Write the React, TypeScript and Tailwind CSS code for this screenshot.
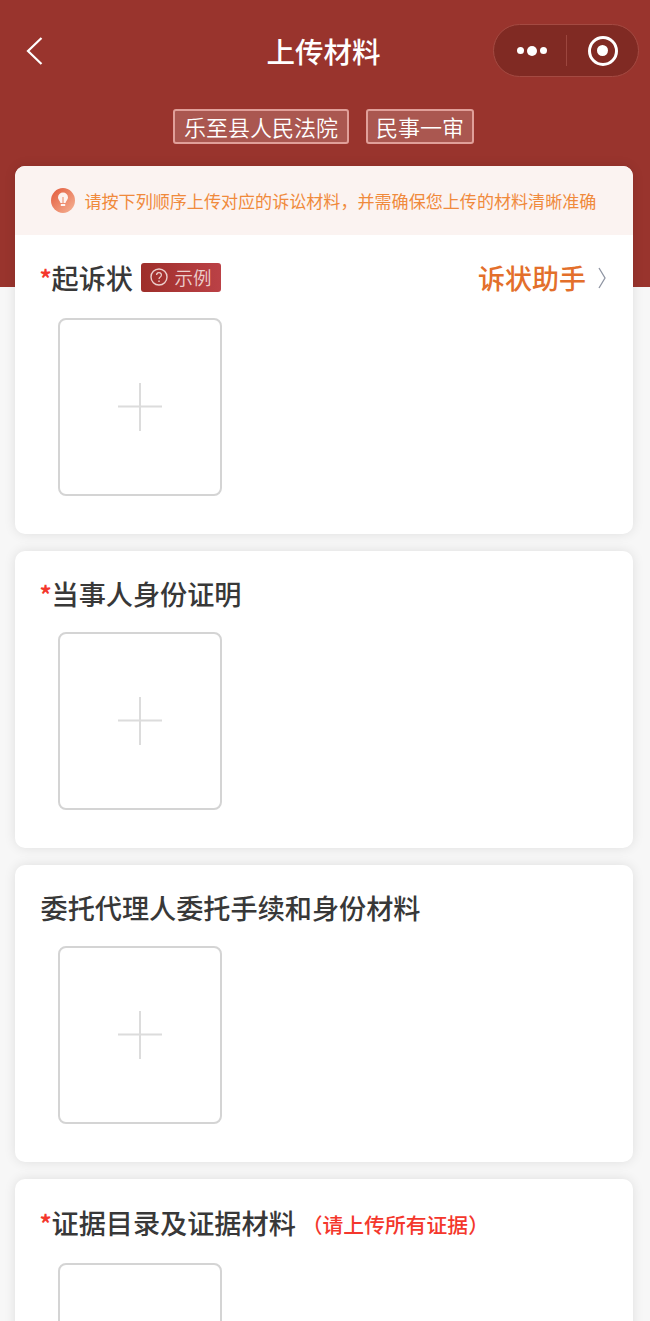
import React from "react";

const cjk = "font-['Noto_Sans_CJK_SC','Noto_Sans',sans-serif]";

function UploadBox() {
  return (
    <div className="ml-[43px] flex h-[178px] w-[164px] shrink-0 items-center justify-center rounded-[8px] border-2 border-[#d4d4d4] bg-white">
      <svg width="44" height="48" viewBox="0 0 44 48" fill="none">
        <path d="M22 0V48M0 23.5H44" stroke="#dcdcdc" strokeWidth="2" />
      </svg>
    </div>
  );
}

function Card({ children }: { children: React.ReactNode }) {
  return (
    <section className="flex h-[297px] flex-col gap-[18px] rounded-[10px] bg-white pt-[23px] shadow-[0_0_12px_rgba(0,0,0,0.1)]">
      {children}
    </section>
  );
}

function Star() {
  return <span className="-ml-[1px] w-[12px] text-[24px] leading-[40px] font-bold text-[#f4372c]">*</span>;
}

function Heading({ required, children }: { required?: boolean; children: React.ReactNode }) {
  return (
    <h2 className="flex h-[40px] items-center pl-[26px] text-[27.15px] leading-[40px] font-medium text-[#383838]">
      {required && <Star />}
      {children}
    </h2>
  );
}

export default function App() {
  return (
    <div className={`${cjk} h-[1321px] w-[650px] overflow-hidden bg-[#f7f7f7]`}>
      {/* Red banner with the navigation bar and case tags */}
      <div className="h-[287px] bg-[#99342d]">
        <header className="relative flex h-[101px] items-center justify-center pr-[3px]">
          <svg className="absolute left-[26px] top-[37px]" width="18" height="28" viewBox="0 0 18 28" fill="none">
            <path d="M15.5 1L2 14L15.5 27" stroke="#fff" strokeWidth="2.2" />
          </svg>
          <h1 className="text-[28.5px] leading-[40px] font-medium text-white">上传材料</h1>
          <div className="absolute left-[493px] top-[24px] flex h-[53px] w-[146px] items-center rounded-full border border-[#a44a42] bg-[#802a23]">
            <div className="flex w-[72px] items-center justify-center gap-[3px] pl-[3px]">
              <span className="h-[7px] w-[7px] rounded-full bg-white" />
              <span className="h-[10px] w-[10px] rounded-full bg-white" />
              <span className="h-[7px] w-[7px] rounded-full bg-white" />
            </div>
            <span className="h-[31px] w-px bg-[#9c463e]" />
            <div className="flex flex-1 items-center justify-center">
              <span className="flex h-[30px] w-[30px] items-center justify-center rounded-full border-[3.5px] border-white">
                <span className="h-[11px] w-[11px] rounded-full bg-white" />
              </span>
            </div>
          </div>
        </header>
        <div className="mt-[8px] flex justify-center gap-[17px] pr-[3px] text-[22px] leading-[31px] font-[350] text-white">
          <span className="h-[35px] rounded-[3px] border-2 border-[#e09f99] bg-[#aa5750] px-[9px]">乐至县人民法院</span>
          <span className="h-[35px] rounded-[3px] border-2 border-[#e09f99] bg-[#aa5750] px-[8px]">民事一审</span>
        </div>
      </div>

      {/* Material cards */}
      <main className="ml-[14.5px] -mt-[121px] flex w-[618.5px] flex-col gap-[17px]">
        <section className="h-[368px] overflow-hidden rounded-[10px] bg-white shadow-[0_0_12px_rgba(0,0,0,0.1)]">
          <div className="flex h-[69px] items-center bg-[#fbf3f1] pl-[36px]">
            <svg className="shrink-0" width="24" height="25" viewBox="0 0 24 25">
              <defs>
                <linearGradient id="bulbFill" x1="0" y1="0" x2="1" y2="1">
                  <stop offset="0" stopColor="#e2593a" />
                  <stop offset="1" stopColor="#f6b496" />
                </linearGradient>
              </defs>
              <ellipse cx="12" cy="12.5" rx="12" ry="12.5" fill="url(#bulbFill)" />
              <path d="M7 9.5a5 5 0 0 1 10 0c0 2-1.6 3-2.5 5.5h-5C8.6 12.5 7 11.5 7 9.5Z" fill="#fff" opacity="0.9" />
              <rect x="9.8" y="16" width="4.4" height="2" fill="#fff" opacity="0.9" />
              <path d="M12 9v6" stroke="#eb8a68" strokeWidth="1" />
            </svg>
            <p className="ml-[10px] text-[17.07px] leading-[24px] whitespace-nowrap text-[#f08a3c]">
              请按下列顺序上传对应的诉讼材料，并需确保您上传的材料清晰准确
            </p>
          </div>
          <div className="mt-[23px] mb-[20px] flex h-[40px] items-center justify-between pr-[27px] pl-[26px]">
            <div className="flex items-center">
              <Star />
              <h2 className="text-[27.15px] leading-[40px] font-medium text-[#383838]">起诉状</h2>
              <span className="mt-[-2px] ml-[8px] flex h-[29px] w-[80px] items-center justify-center gap-[6px] rounded-[3px] bg-gradient-to-r from-[#9e2e2a] to-[#bb4146] text-[18.5px] leading-[26px] font-[350] text-[#eccfcd]">
                <svg width="18" height="18" viewBox="0 0 18 18" fill="none" stroke="#eccfcd">
                  <circle cx="9" cy="9" r="8" strokeWidth="1.4" />
                  <path d="M6.6 7a2.4 2.4 0 1 1 3.7 2c-.9.6-1.3 1-1.3 2" strokeWidth="1.3" />
                  <path d="M9 12.6v1.4" strokeWidth="1.4" />
                </svg>
                示例
              </span>
            </div>
            <div className="flex items-center">
              <span className="text-[27px] leading-[40px] font-medium text-[#e36f2b]">诉状助手</span>
              <svg className="ml-[12px]" width="8" height="22" viewBox="0 0 8 22" fill="none">
                <path d="M1 1L7 11L1 21" stroke="#8f95a3" strokeWidth="1.3" />
              </svg>
            </div>
          </div>
          <UploadBox />
        </section>

        <Card>
          <Heading required>当事人身份证明</Heading>
          <UploadBox />
        </Card>

        <Card>
          <Heading>委托代理人委托手续和身份材料</Heading>
          <UploadBox />
        </Card>

        <Card>
          <div className="mt-[1px] mb-[2px]">
            <Heading required>
              证据目录及证据材料
              <span className="mt-[2px] ml-[6px] text-[20.8px] font-medium text-[#f4372c]">（请上传所有证据）</span>
            </Heading>
          </div>
          <UploadBox />
        </Card>
      </main>
    </div>
  );
}
